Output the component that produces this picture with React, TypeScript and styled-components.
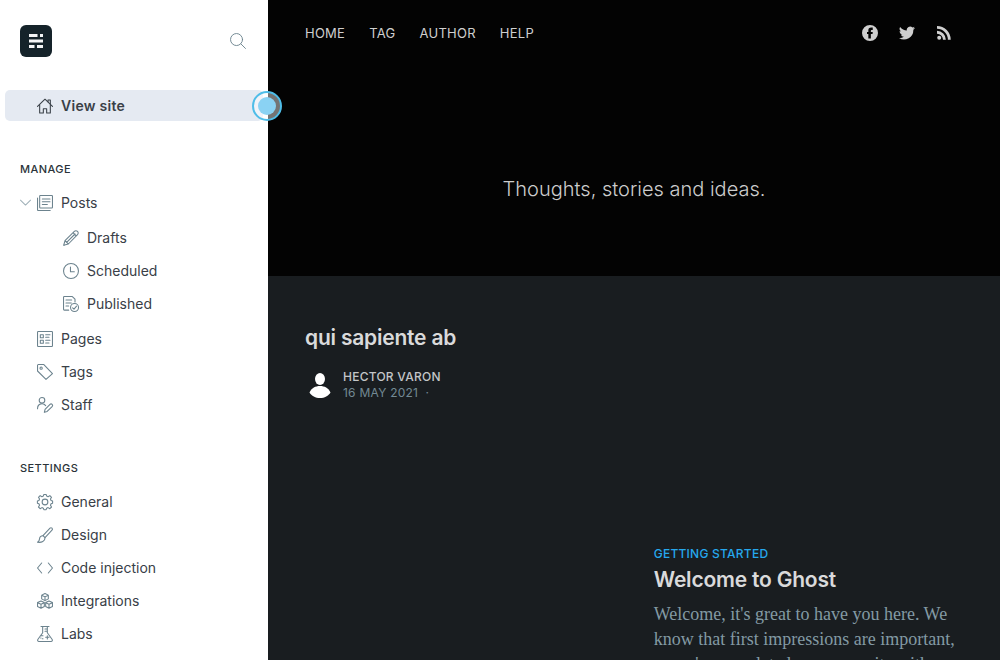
import React from "react";
import styled, { createGlobalStyle } from "styled-components";

const Global = createGlobalStyle`
  * { box-sizing: border-box; }
  body { margin: 0; background: #191d20; font-family: Inter, "Liberation Sans", sans-serif; -webkit-font-smoothing: antialiased; }
  a { color: inherit; text-decoration: none; }
  h1, h2, h3, p, ul { margin: 0; padding: 0; }
  ul { list-style: none; }
`;

const Layout = styled.div`
  display: flex;
  height: 100vh;
  overflow: hidden;
`;

const Sidebar = styled.aside`
  position: relative;
  z-index: 1;
  flex: 0 0 268px;
  background: #fff;
  color: #394047;
`;

const SidebarTop = styled.div`
  display: flex;
  align-items: center;
  justify-content: space-between;
  padding: 25px 22px 33px 20px;
`;

const LogoLink = styled.a`
  display: block;
  width: 32px;
  height: 32px;
  border-radius: 6px;
  background: #15232a;
  svg { display: block; }
`;

const SearchButton = styled.button`
  display: flex;
  padding: 0;
  border: 0;
  background: none;
  color: #6c838e;
`;

const Section = styled.section`
  margin-bottom: 40px;
`;

const SectionTitle = styled.h3`
  padding-left: 20px;
  margin-bottom: 10px;
  font-size: 11px;
  line-height: 16px;
  font-weight: 500;
  letter-spacing: 0.04em;
  text-transform: uppercase;
  color: #2b3339;
`;

const List = styled.ul<{ $nested?: boolean }>`
  display: flex;
  flex-direction: column;
  gap: 2px;
  padding: ${(p) => (p.$nested ? "4px 0 4px 26px" : "0")};
`;

const NavLink = styled.a<{ $active?: boolean }>`
  display: flex;
  align-items: center;
  gap: 8px;
  height: 31px;
  margin: 0 5px;
  padding-left: 32px;
  border-radius: 5px;
  font-size: 14px;
  line-height: 20px;
  letter-spacing: ${(p) => (p.$active ? "0.02em" : "normal")};
  font-weight: ${(p) => (p.$active ? 600 : 400)};
  background: ${(p) => (p.$active ? "#e5eaf2" : "transparent")};
  color: #394047;
  svg { color: ${(p) => (p.$active ? "#394047" : "#6c838e")}; }
`;

const PostsRow = styled.div`
  position: relative;
`;

const Toggle = styled.button`
  position: absolute;
  z-index: 1;
  left: 20px;
  top: 10px;
  display: flex;
  padding: 0;
  border: 0;
  background: none;
  color: #9fb0b8;
`;

const ViewSite = styled.div`
  position: relative;
  margin-bottom: 40px;
`;

const Cursor = styled.span`
  position: absolute;
  z-index: 2;
  right: -14px;
  top: 1px;
  width: 30px;
  height: 30px;
  border: 2px solid #4fbde8;
  border-radius: 50%;
  background: rgba(255, 255, 255, 0.45);
  &::after {
    content: "";
    position: absolute;
    inset: 4px;
    border-radius: 50%;
    background: #8ad2f3;
  }
`;

const Site = styled.main`
  flex: 1;
  min-width: 0;
  color: #d9dadb;
`;

const Hero = styled.header`
  padding: 20px 37px 71px;
  background: #030303;
`;

const HeroBar = styled.nav`
  display: flex;
  align-items: center;
  justify-content: space-between;
  height: 26px;
  padding-right: 11px;
`;

const LinkRow = styled.div<{ $gap: number }>`
  display: flex;
  align-items: center;
  gap: ${(p) => p.$gap}px;
  font-size: 13px;
  line-height: 20px;
  letter-spacing: 0.02em;
  color: #cfcfcf;
  a { display: block; }
  svg { display: block; }
`;

const Tagline = styled.h1`
  margin-top: 127px;
  font-size: 20px;
  line-height: 32px;
  font-weight: 300;
  text-align: center;
  color: #ccc;
`;

const Feed = styled.div`
  padding: 48px 37px 0;
`;

const PostTitle = styled.h2`
  font-size: 21px;
  line-height: 28px;
  font-weight: 600;
  letter-spacing: -0.01em;
  color: #d9dadb;
`;

const Byline = styled.div`
  display: flex;
  align-items: center;
  gap: 8px;
  margin-top: 16px;
`;

const Meta = styled.div`
  font-size: 12px;
  line-height: 16px;
  letter-spacing: 0.02em;
  text-transform: uppercase;
  color: #738a94;
`;

const Author = styled.a`
  display: block;
  font-weight: 500;
  color: #c3c6c8;
`;

const Featured = styled.article`
  width: 47%;
  margin: 144px 0 0 auto;
`;

const Category = styled.p`
  font-size: 12px;
  line-height: 16px;
  font-weight: 500;
  letter-spacing: 0.02em;
  text-transform: uppercase;
  color: #26a8ed;
  margin-bottom: 4px;
`;

const Excerpt = styled.p`
  margin-top: 8px;
  font-family: Georgia, "Liberation Serif", serif;
  font-size: 18px;
  line-height: 25px;
  color: #839aa4;
`;

const paths: Record<string, React.ReactNode> = {
  house: <><path d="M.8 12.500 12 1.800l11.200 10.700" /><path d="M4 10v12.500h5.500V16h5v6.500H20V10" /><path d="M16.500 5.500V3H20v6" /></>,
  posts: <><rect x="4" y=".8" width="19.200" height="18.700" rx="1" /><path d="M.8 4.500v17.700a1 1 0 0 0 1 1h18M8 6h11.500M8 10h11.500M8 14.300h7.500" /></>,
  pencil: <path d="M1 23l2-7L17 2.200a2.800 2.800 0 0 1 4.800 4.800L8 21zM3 16l5 5M15 4l5 5M5.500 18.500 18 6M1.200 21.500l1.300 1.300" />,
  clock: <><circle cx="12" cy="12" r="11.200" /><path d="M11.200 6v7H17" /></>,
  published: <><path d="M8.500 21.200H2a1.200 1.200 0 0 1-1.200-1.200V2A1.200 1.200 0 0 1 2 .8h12l4 4V9M4.500 6H13M4.500 10.500h8M4.500 15h4" /><circle cx="17.300" cy="17.300" r="6" /><path d="m14.400 17.700 2.100 2 3.800-4.500" /></>,
  pages: <><rect x=".8" y=".8" width="22.400" height="22.400" rx="1" /><path d="M5 5.500h4.500V10H5zM5 14h4.500v4.500H5zM13 5.500h6.500M13 9.500h5M13 14h6.500M13 18h5" /></>,
  tag: <><path d="M.8 2v8.500l12.700 12.700 9.700-8.700L10.300.8H2A1.200 1.200 0 0 0 .8 2z" /><circle cx="6.200" cy="6.200" r="1.700" /></>,
  staff: <><circle cx="7.500" cy="5" r="4.200" /><path d="M.8 17.500C.8 8.800 10 8.500 13 13" /><path d="m11 23 1.100-4.500 7.400-7.400a2.200 2.200 0 0 1 3.200 3.200l-7.500 7.400z" /></>,
  gear: <><circle cx="12" cy="12" r="4.300" /><path d="M9.500 3.100 10.300.8h3.400l.8 2.300 2.100.9 2.700-1.600 2.500 2.500-1.600 2.700.9 2.100 2.300.8v3.400l-2.300.8-.9 2.100 1.600 2.700-2.500 2.500-2.700-1.600-2.100.9-.8 2.200h-3.400l-.8-2.200-2.100-.9-2.700 1.600-2.500-2.500 1.600-2.700-.9-2.100-2.300-.8v-3.400l2.300-.8.9-2.100L2.200 4.900l2.500-2.500L7.400 4z" /></>,
  brush: <><path d="M9 13 19.500 1.800a2.100 2.100 0 0 1 3 3L12 16M9 13l3 3" /><path d="M9 13c-3 0-5 1.500-5.200 4.800C3.700 20 2.700 21.800.8 22.800c6 1 11.400-1.500 11.200-6.800" /></>,
  code: <path d="m7 4.500-6.200 7.500L7 19.500M17 4.500l6.200 7.500-6.200 7.500" />,
  blocks: <><path d="m12 .8 5 2.400v5.600L12 11.400 7 8.800V3.200zM7 3.400l5 2.400 5-2.400M12 5.800v5.400" /><path d="m6 12 5 2.400v5.800L6 22.800l-5.200-2.600v-5.800zM.8 14.500 6 17l5-2.500M6 17v5.600" /><path d="m18 12 5.200 2.400v5.800L18 22.800l-5-2.600v-5.800zM13 14.500l5 2.500 5.200-2.500M18 17v5.600" /></>,
  flask: <path d="M6 .8h12M8.500.8v9.400L1.200 20.300c-.8 1.400 0 2.900 1.600 2.900h18.400c1.600 0 2.400-1.500 1.600-2.900L15.500 10.200V.8M12 4.500h3.500M12 8h3.500M5 14.500h4M15.500 14.500v5M13 17h5M8 19h1M5.500 18h.5" />,
  search: <><circle cx="9.800" cy="9.800" r="9" /><path d="m16.400 16.400 6.800 6.800" /></>,
  chevron: <path d="m1 7 11 10.500L23 7" />,
};

const Icon = ({ name, size = 16, weight = 1.6 }: { name: string; size?: number; weight?: number }) => (
  <svg width={size} height={size} viewBox="0 0 24 24" fill="none" stroke="currentColor" strokeWidth={weight} strokeLinecap="round" strokeLinejoin="round" overflow="visible" aria-hidden="true">
    {paths[name]}
  </svg>
);

type Entry = [icon: string, label: string];

const drafts: Entry[] = [["pencil", "Drafts"], ["clock", "Scheduled"], ["published", "Published"]];
const manage: Entry[] = [["pages", "Pages"], ["tag", "Tags"], ["staff", "Staff"]];
const settings: Entry[] = [["gear", "General"], ["brush", "Design"], ["code", "Code injection"], ["blocks", "Integrations"], ["flask", "Labs"]];

const Entries = ({ items, nested }: { items: Entry[]; nested?: boolean }) => (
  <List $nested={nested}>
    {items.map(([icon, label]) => (
      <li key={label}><NavLink href="#"><Icon name={icon} />{label}</NavLink></li>
    ))}
  </List>
);

export default function App() {
  return (
    <>
      <Global />
      <Layout>
        <Sidebar>
          <SidebarTop>
            <LogoLink href="#" aria-label="Home">
              <svg width="32" height="32" viewBox="0 0 32 32" fill="#f4f5f6">
                <path d="M9 9h8.500v3H9zM20 9h3v3h-3zM9 14.500h14v3H9zM9 20h5.500v3H9zM17 20h6v3h-6z" />
              </svg>
            </LogoLink>
            <SearchButton aria-label="Search"><Icon name="search" weight={1.4} /></SearchButton>
          </SidebarTop>
          <ViewSite>
            <NavLink href="#" $active><Icon name="house" />View site</NavLink>
            <Cursor />
          </ViewSite>
          <Section>
            <SectionTitle>Manage</SectionTitle>
            <PostsRow>
              <Toggle aria-label="Collapse posts"><Icon name="chevron" size={11} weight={2.2} /></Toggle>
              <NavLink href="#"><Icon name="posts" />Posts</NavLink>
            </PostsRow>
            <Entries items={drafts} nested />
            <Entries items={manage} />
          </Section>
          <Section>
            <SectionTitle>Settings</SectionTitle>
            <Entries items={settings} />
          </Section>
        </Sidebar>
        <Site>
          <Hero>
            <HeroBar>
              <LinkRow $gap={24}>
                <a href="#">HOME</a>
                <a href="#">TAG</a>
                <a href="#">AUTHOR</a>
                <a href="#">HELP</a>
              </LinkRow>
              <LinkRow $gap={21}>
                <a href="#" aria-label="Facebook">
                  <svg width="16" height="16" viewBox="0 0 32 32" fill="currentColor"><path d="M16 0a16 16 0 1 0 0 32 16 16 0 0 0 0-32zm5.500 10.200h-2.300c-1.200 0-1.500.5-1.500 1.500V14h3.800l-.4 3.900h-3.400V27h-5v-9.100H10V14h2.700v-3.300c0-3.600 1.900-5.600 5.600-5.600h3.200z" /></svg>
                </a>
                <a href="#" aria-label="Twitter">
                  <svg width="16" height="16" viewBox="0 0 24 24" fill="currentColor"><path d="M24 4.600a10 10 0 0 1-2.800.8 5 5 0 0 0 2.100-2.700 10 10 0 0 1-3.100 1.200 4.900 4.900 0 0 0-8.400 4.500A14 14 0 0 1 1.700 3.100a4.900 4.900 0 0 0 1.500 6.600 5 5 0 0 1-2.200-.6 4.900 4.900 0 0 0 4 4.900 5 5 0 0 1-2.300.1 4.900 4.900 0 0 0 4.600 3.400A10 10 0 0 1 0 19.500a14 14 0 0 0 21.500-12.400A10 10 0 0 0 24 4.600z" /></svg>
                </a>
                <a href="#" aria-label="RSS">
                  <svg width="16" height="16" viewBox="0 0 24 24" fill="currentColor"><circle cx="4.800" cy="19" r="3" /><path d="M1.500 8.800v4.300a9 9 0 0 1 9 9h4.300A13.300 13.300 0 0 0 1.500 8.800zm0-7.300v4.300a16.300 16.300 0 0 1 16.300 16.300h4.300A20.600 20.600 0 0 0 1.500 1.500z" /></svg>
                </a>
              </LinkRow>
            </HeroBar>
            <Tagline>Thoughts, stories and ideas.</Tagline>
          </Hero>
          <Feed>
            <PostTitle>qui sapiente ab</PostTitle>
            <Byline>
              <svg width="30" height="34" viewBox="0 0 30 34" fill="#fff" aria-hidden="true"><ellipse cx="15" cy="11" rx="5" ry="6" /><path d="M4.500 24.500c2-4.500 6-6.500 10.500-6.500s8.500 2 10.500 6.500c-2 3.500-6 5.500-10.500 5.500s-8.500-2-10.500-5.500z" /></svg>
              <Meta>
                <Author href="#">Hector Varon</Author>
                16 May 2021 &nbsp;·
              </Meta>
            </Byline>
            <Featured>
              <Category>Getting Started</Category>
              <PostTitle>Welcome to Ghost</PostTitle>
              <Excerpt>Welcome, it's great to have you here. We know that first impressions are important, so we've populated your new site with some initial getting started posts.</Excerpt>
            </Featured>
          </Feed>
        </Site>
      </Layout>
    </>
  );
}
